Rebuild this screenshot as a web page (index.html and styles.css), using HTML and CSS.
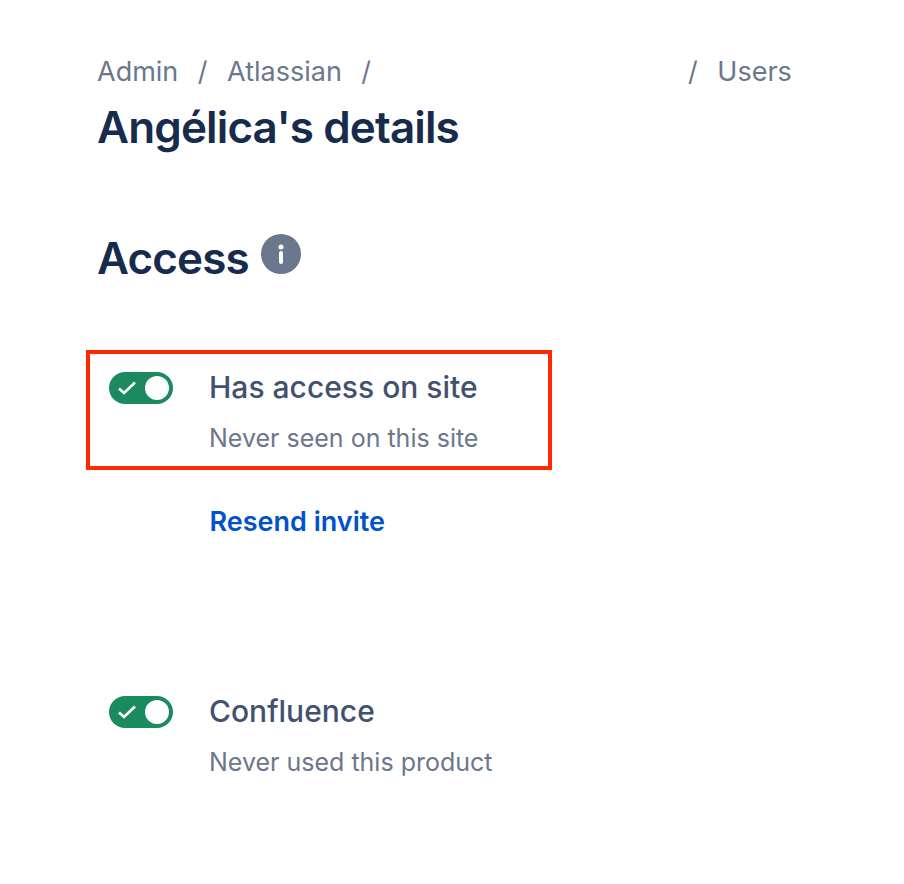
FILE: index.html
```html
<!DOCTYPE html>
<html lang="en">
<head>
    <meta charset="UTF-8">
    <meta name="viewport" content="width=device-width, initial-scale=1.0">
    <title>Angélica's details</title>
    <link rel="stylesheet" href="styles.css">
</head>
<body>
    <nav class="crumbs">
        <span>Admin</span>
        <span class="sep">/</span>
        <span>Atlassian</span>
        <span class="sep">/</span>
        <span class="crumb-blank"></span>
        <span class="sep">/</span>
        <span>Users</span>
    </nav>
    <h1>Angélica's details</h1>

    <h2 class="access-title">
        Access
        <svg class="info" width="40" height="40" viewBox="0 0 40 40">
            <circle cx="20" cy="20" r="20" fill="#6b778c"/>
            <circle cx="20" cy="13" r="2.5" fill="#fff"/>
            <rect x="18" y="17" width="4" height="13" rx="2" fill="#fff"/>
        </svg>
    </h2>

    <div class="row highlighted">
        <span class="toggle">
            <svg width="18" height="14" viewBox="0 0 18 14"><path d="M1 7.5l5 4.5L17 1.5" fill="none" stroke="#fff" stroke-width="2.6"/></svg>
            <span class="knob"></span>
        </span>
        <div>
            <div class="row-title">Has access on site</div>
            <div class="row-sub">Never seen on this site</div>
        </div>
    </div>
    <a class="resend" href="#">Resend invite</a>

    <div class="row product">
        <span class="toggle">
            <svg width="18" height="14" viewBox="0 0 18 14"><path d="M1 7.5l5 4.5L17 1.5" fill="none" stroke="#fff" stroke-width="2.6"/></svg>
            <span class="knob"></span>
        </span>
        <div>
            <div class="row-title">Confluence</div>
            <div class="row-sub">Never used this product</div>
        </div>
    </div>
</body>
</html>
```

FILE: styles.css
```css
body {
    font-family: Inter, "Liberation Sans", sans-serif;
    margin: 0;
    padding: 52px 0 0 97px;
    background-color: #fff;
}
.crumbs {
    display: flex;
    font-size: 27px;
    line-height: 40px;
    height: 40px;
    color: #6b778c;
}
.sep {
    margin: 0 19.5px;
}
.crumb-blank {
    width: 278px;
}
h1 {
    font-size: 44px;
    font-weight: 600;
    line-height: 56px;
    letter-spacing: -0.85px;
    color: #172b4d;
    margin: 7px 0 0 0;
}
.access-title {
    display: flex;
    align-items: flex-start;
    gap: 12px;
    font-size: 44px;
    font-weight: 600;
    line-height: 56px;
    letter-spacing: -0.85px;
    color: #172b4d;
    margin: 75px 0 0 0;
}
.info {
    margin-top: 4px;
}
.row {
    display: flex;
    align-items: flex-start;
    gap: 36px;
    width: 466px;
    box-sizing: border-box;
    padding: 18px 0 0 19px;
}
.highlighted {
    height: 120px;
    margin: 64px 0 0 -11px;
    border: 4px solid #ff2a00;
}
.product {
    margin: 0 0 0 -11px;
    padding: 156px 0 0 23px;
}
.toggle {
    display: flex;
    align-items: center;
    justify-content: space-between;
    width: 64px;
    height: 32px;
    box-sizing: border-box;
    padding: 0 4px 0 9px;
    border-radius: 16px;
    background-color: #1b8a5f;
    flex-shrink: 0;
}
.knob {
    width: 24px;
    height: 24px;
    border-radius: 50%;
    background-color: #fff;
}
.row-title {
    font-size: 30px;
    font-weight: 500;
    line-height: 32px;
    margin-top: -1px;
    color: #42526e;
}
.row-sub {
    font-size: 25px;
    line-height: 32px;
    margin-top: 19px;
    color: #6b778c;
}
.resend {
    display: block;
    margin: 34px 0 0 112.5px;
    font-size: 27px;
    font-weight: 600;
    line-height: 36px;
    color: #0052cc;
    text-decoration: none;
}
```
